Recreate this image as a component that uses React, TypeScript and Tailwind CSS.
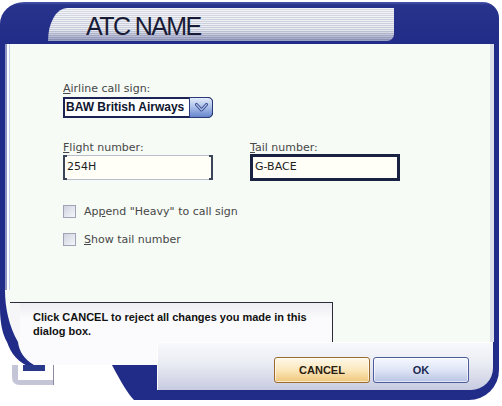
import React from "react";

const BLUE = "#212c88";

function Chevron() {
  return (
    <svg width="13" height="9" viewBox="0 0 13 9">
      <path d="M1.5 1.5 L6.5 7 L11.5 1.5" fill="none" stroke="#2b3f86" strokeWidth="3" strokeLinejoin="round" strokeLinecap="round" />
      <path d="M1.5 1.5 L6.5 7 L11.5 1.5" fill="none" stroke="#a8bce6" strokeWidth="1.4" strokeLinejoin="round" strokeLinecap="round" />
    </svg>
  );
}

function Check({ children }: { children: React.ReactNode }) {
  return (
    <div className="flex items-center gap-[8px] h-[13px]">
      <div className="w-[13px] h-[13px] shrink-0 border border-[#9ea3b6] bg-[linear-gradient(135deg,#cfd3df,#f6f7fb)]" />
      <span className="text-[11px] leading-[13px] text-[#474747]">{children}</span>
    </div>
  );
}

export default function App() {
  return (
    <div className="w-[502px] h-[406px] bg-white overflow-hidden font-['DejaVu_Sans',sans-serif]">
      <div className="w-[499px] h-[400px] pt-[2px] flex flex-col">
        {/* Title bar */}
        <div className="h-[42px] shrink-0 bg-[linear-gradient(to_bottom,#4b59aa_0px,#28338c_3px,#212c88_100%)] rounded-tl-[24px_22px] rounded-tr-[16px] pl-[48px] pt-[6px]">
          <div className="w-[346px] h-[33px] rounded-tl-[19px_33px] rounded-br-[7px] overflow-hidden bg-[linear-gradient(to_bottom,rgba(255,255,255,0.35),rgba(255,255,255,0)_65%,rgba(50,60,130,0.45)),repeating-linear-gradient(to_bottom,#eceef3_0px,#eceef3_1px,#c6cad8_1px,#c6cad8_2px)] pl-[38px] pt-[2px]">
            <div className="text-[25px] leading-[33px] tracking-[-1.6px] text-[#181b36] font-['Liberation_Sans',sans-serif]">
              ATC NAME
            </div>
          </div>
        </div>

        {/* Body */}
        <div className="h-[298px] shrink-0 flex relative">
          <div className="w-[10px] flex shrink-0">
            <div className="w-[5px] bg-[#212c88]" />
            <div className="w-[2px] bg-[#8f96c4]" />
            <div className="w-[2px] bg-white" />
            <div className="w-[1px] bg-[#c6d2ea]" />
          </div>
          <div className="flex-1 bg-[#f6fbf6] flex flex-col">
            <div className="pl-[53px] pt-[38px]">
              <div className="text-[11px] leading-[13px] text-[#474747]">
                <u>A</u>irline call sign:
              </div>
              <div className="mt-[2px] w-[150px] h-[21px] flex border-2 border-[#1b2452] rounded-r-[5px] bg-white">
                <div className="flex-1 pl-[1px] text-[12px] leading-[17px] font-bold font-['Liberation_Sans',sans-serif] text-[#0e1530] whitespace-nowrap overflow-hidden">
                  BAW British Airways
                </div>
                <div className="w-[24px] -my-[2px] -mr-[2px] border border-[#2a3a7a] rounded-r-[5px] bg-[linear-gradient(to_bottom,#e4ecfb,#a9bde8_50%,#6484cc)] flex items-center justify-center">
                  <Chevron />
                </div>
              </div>

              <div className="flex gap-[37px] mt-[23px]">
                <div className="w-[150px]">
                  <div className="text-[11px] leading-[13px] text-[#474747]">
                    <u>F</u>light number:
                  </div>
                  <div className="relative mt-[1px] h-[25px] border border-[#b9bdcc] border-x-2 border-x-[#3b4459] bg-[#fffff8] flex items-center pl-[2px] text-[11px] text-[#1e1e1e]">
                    254H
                    <span className="absolute -left-[2px] -top-[1px] w-[4px] h-[2px] bg-[#3b4459]" />
                    <span className="absolute -left-[2px] -bottom-[1px] w-[4px] h-[2px] bg-[#3b4459]" />
                    <span className="absolute -right-[2px] -top-[1px] w-[4px] h-[2px] bg-[#3b4459]" />
                    <span className="absolute -right-[2px] -bottom-[1px] w-[4px] h-[2px] bg-[#3b4459]" />
                  </div>
                </div>
                <div className="w-[150px]">
                  <div className="text-[11px] leading-[13px] text-[#474747]">
                    <u>T</u>ail number:
                  </div>
                  <div className="h-[27px] border-[3px] border-[#1a2242] bg-[#fffff8] flex items-center pl-[2px] text-[11px] text-[#1e1e1e]">
                    G-BACE
                  </div>
                </div>
              </div>

              <div className="mt-[24px] flex flex-col gap-[15px]">
                <Check>
                  Ap<u>p</u>end "Heavy" to call sign
                </Check>
                <Check>
                  <u>S</u>how tail number
                </Check>
              </div>
            </div>

            <div className="mt-auto ml-[2px] w-[321px] h-[40px] border-t border-r border-[#2b2b3a] bg-[linear-gradient(to_bottom,#ededf2,#fbfbfd_40%,#fbfbfd)] pl-[21px] pt-[7px] text-[11px] leading-[14px] font-bold font-['Liberation_Sans',sans-serif] text-[#111111] whitespace-nowrap">
              Click CANCEL to reject all changes you made in this
              <br />
              dialog box.
            </div>
          </div>
          <div className="w-[9px] flex shrink-0">
            <div className="w-[4px] bg-[#dde0ea]" />
            <div className="w-[5px] bg-[#212c88]" />
          </div>

          <svg className="absolute left-0 bottom-0" width="20" height="52" viewBox="0 0 20 52">
            <rect x="0" y="0" width="20" height="52" fill="#f6fbf6" />
            <rect x="10" y="12" width="10" height="40" fill="#f6f6f9" />
            <line x1="10" y1="12.5" x2="20" y2="12.5" stroke="#2b2b3a" />
            <path d="M0 52 L0 18 C0 34 3 45 7 52 Z" fill="#ffffff" />
            <path d="M0 0 H5 C5 18 9 36 18 52 H7 C3 45 0 34 0 18 Z" fill={BLUE} />
          </svg>
        </div>

        {/* Footer */}
        <div className="h-[58px] shrink-0 flex">
          <svg className="shrink-0" width="157" height="58" viewBox="0 0 157 58">
            <path d="M18 0 H157 V23 H34 C24 17 19 9 18 0 Z" fill="#fbfbfd" />
            <path d="M7 0 H18 C19 9 24 17 34 23 L34 25 L30 25 C19 21 11 12 7 0 Z" fill={BLUE} />
            <path d="M112 23 H157 V58 H134 C128 52 121 40 112 23 Z" fill={BLUE} />
            <path d="M12 23 H54 V43 H20 Q12 43 12 35 Z" fill="#c4c6d8" />
            <rect x="18" y="23" width="35" height="15" fill="#ffffff" />
            <rect x="23" y="23" width="22" height="6" fill="#2a3a8a" />
            <line x1="53.5" y1="23" x2="53.5" y2="43" stroke="#8a8aa4" />
          </svg>
          <div className="flex-1 bg-[#212c88] rounded-br-[30px] pr-[6px] pb-[10px]">
            <div className="h-full rounded-br-[22px] border-t border-l border-white bg-[linear-gradient(to_bottom,#f7f8fb,#eceef5_40%,#c8cbe0)] flex justify-end items-start pt-[14px] pr-[24px] gap-[3px]">
              <div className="w-[96px] h-[26px] rounded-[3px] border border-[#9a6b2c] bg-[linear-gradient(to_bottom,#fff9ea,#fbe7bc_50%,#efc679)] shadow-[inset_0_0_0_1px_rgba(255,255,255,0.6)] flex items-center justify-center text-[11px] font-bold font-['Liberation_Sans',sans-serif] text-[#2a2010]">
                CANCEL
              </div>
              <div className="w-[96px] h-[26px] rounded-[3px] border border-[#4c5c9c] bg-[linear-gradient(to_bottom,#f6f8fe,#dfe5f6_50%,#b9c3e3)] shadow-[inset_0_0_0_1px_rgba(255,255,255,0.6)] flex items-center justify-center text-[11px] font-bold font-['Liberation_Sans',sans-serif] text-[#1c2a50]">
                OK
              </div>
            </div>
          </div>
        </div>
      </div>
    </div>
  );
}
